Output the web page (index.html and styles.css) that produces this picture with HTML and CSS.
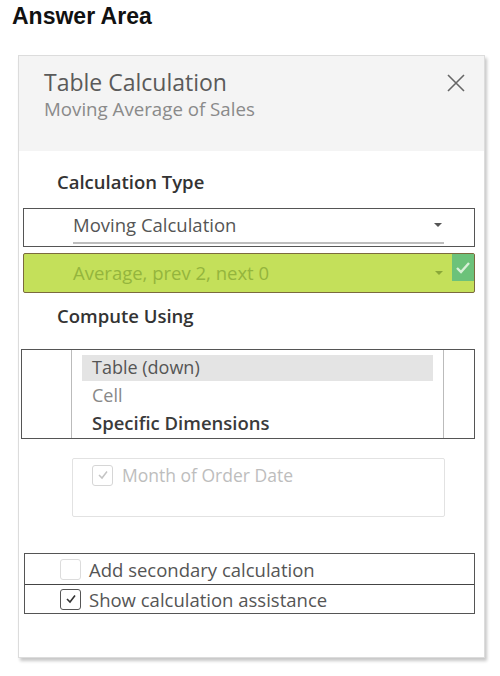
FILE: index.html
```html
<!DOCTYPE html>
<html>
<head>
<meta charset="utf-8">
<link rel="stylesheet" href="styles.css">
</head>
<body>
<h1 class="title">Answer Area</h1>
<div class="dialog">
  <div class="header">
    <div class="htext">
      <div class="htitle">Table Calculation</div>
      <div class="hsub">Moving Average of Sales</div>
    </div>
    <svg class="close" width="20" height="20" viewBox="0 0 20 20"><path d="M2 2 L18 18 M18 2 L2 18" stroke="#666" stroke-width="1.6" fill="none"/></svg>
  </div>
  <div class="content">
    <div class="label label-calc">Calculation Type</div>
    <div class="select">
      <span class="select-text">Moving Calculation</span>
      <span class="caret"></span>
      <span class="underline"></span>
    </div>
    <div class="select green">
      <span class="select-text">Average, prev 2, next 0</span>
      <span class="caret"></span>
      <span class="ok"><svg width="22" height="24" viewBox="0 0 22 24"><path d="M5 12 L9 16 L17 7" stroke="#d8f0d8" stroke-width="2.4" fill="none"/></svg></span>
    </div>
    <div class="label label-compute">Compute Using</div>
    <div class="list">
      <div class="list-inner">
        <div class="item selected">Table (down)</div>
        <div class="item">Cell</div>
        <div class="item bold">Specific Dimensions</div>
      </div>
    </div>
    <div class="dims">
      <div class="dim-row">
        <span class="cb cb-disabled"><svg width="14" height="14" viewBox="0 0 14 14"><path d="M3 7 L6 10 L11 3.5" stroke="#c4c4c4" stroke-width="1.5" fill="none"/></svg></span>
        <span>Month of Order Date</span>
      </div>
    </div>
    <div class="opts">
      <div class="opt">
        <span class="cb cb-empty"></span>
        <span>Add secondary calculation</span>
      </div>
      <div class="opt">
        <span class="cb cb-checked"><svg width="14" height="14" viewBox="0 0 14 14"><path d="M3 7 L6 10 L11 3.5" stroke="#333" stroke-width="1.6" fill="none"/></svg></span>
        <span>Show calculation assistance</span>
      </div>
    </div>
  </div>
</div>
</body>
</html>
```
FILE: styles.css
```css
* { box-sizing: border-box; }
html, body { margin: 0; padding: 0; background: #fff; }
body {
  font-family: "Open Sans", "Liberation Sans", sans-serif;
  color: #555;
  width: 500px;
  height: 676px;
  overflow: hidden;
}
.title {
  margin: 0;
  padding: 3px 0 0 12px;
  height: 55px;
  font-family: "Liberation Sans", Arial, sans-serif;
  font-weight: bold;
  font-size: 23px;
  color: #111;
  line-height: 26px;
}
.dialog {
  margin-left: 18px;
  width: 467px;
  height: 603px;
  border: 1px solid #dcdcdc;
  box-shadow: 2px 3px 3px rgba(0,0,0,0.22);
  background: #fff;
}
.header {
  height: 95px;
  background: #f4f4f4;
  display: flex;
  justify-content: space-between;
  align-items: flex-start;
  padding: 11px 18px 0 25px;
}
.htitle {
  font-size: 23px;
  color: #5a5a5a;
  line-height: 30px;
}
.hsub {
  font-size: 18.7px;
  color: #8a8a8a;
  line-height: 24px;
  margin-top: 0;
}
.close { margin-top: 6px; }
.content {
  padding: 0 9px 0 4px;
}
.label {
  font-weight: 600;
  font-size: 18.5px;
  color: #333;
  padding-left: 34px;
  line-height: 24px;
}
.label-calc { margin-top: 19px; margin-bottom: 14px; }
.select {
  position: relative;
  height: 39px;
  border: 1px solid #555;
  display: flex;
  align-items: center;
  padding-left: 49px;
  font-size: 18.5px;
  color: #555;
}
.select-text { margin-top: -6px; }
.caret {
  position: absolute;
  right: 32px;
  top: 14px;
  width: 0; height: 0;
  border-left: 4px solid transparent;
  border-right: 4px solid transparent;
  border-top: 4px solid #555;
}
.underline {
  position: absolute;
  left: 49px;
  right: 30px;
  bottom: 2px;
  height: 2px;
  background: #bdbdbd;
}
.select.green {
  margin-top: 6px;
  height: 40px;
  background: #c4e05a;
  border: 1px solid #7b6a3e;
  border-radius: 2px;
  color: #94b53d;
}
.select.green .select-text { margin-top: -2px; }
.select.green .caret { border-top-color: #8aa838; top: 17px; right: 31px; }
.ok {
  position: absolute;
  right: 0;
  top: 0;
  width: 22px;
  height: 27px;
  background: #6cc27a;
  display: flex;
  align-items: center;
  justify-content: center;
}
.label-compute { margin-top: 11px; margin-bottom: 21px; }
.list {
  height: 90px;
  border: 1px solid #555;
  margin-left: -2px;
  padding: 0 30px 0 49px;
}
.list-inner {
  height: 100%;
  border-left: 1px solid #bbb;
  border-right: 1px solid #bbb;
  padding: 5px 10px 0 10px;
}
.item {
  font-size: 18px;
  line-height: 27px;
  padding-left: 10px;
  color: #555;
  height: 27px;
}
.item.selected { background: #e4e4e4; line-height: 25px; height: 26px; }
.item:nth-child(2) { color: #888; line-height: 28px; height: 28px; }
.item.bold { font-weight: 600; color: #3a3a3a; font-size: 18.5px; }
.dims {
  margin: 19px 0 0 49px;
  width: 373px;
  height: 59px;
  border: 1px solid #e2e2e2;
  border-radius: 2px;
  padding: 4px 0 0 19px;
}
.dim-row {
  display: flex;
  align-items: center;
  gap: 9px;
  font-size: 17.5px;
  color: #bdbdbd;
}
.cb {
  width: 21px;
  height: 21px;
  border-radius: 3px;
  display: flex;
  align-items: center;
  justify-content: center;
  flex: none;
}
.cb-disabled { border: 1px solid #d6d6d6; }
.cb-empty { border: 1px solid #dcdcdc; }
.cb-checked { border: 1.5px solid #555; }
.opts {
  margin-top: 36px;
  border: 1px solid #555;
  margin-left: 1px;
}
.opt {
  height: 30px;
  display: flex;
  align-items: center;
  gap: 8px;
  padding-left: 35px;
  font-size: 18.5px;
  color: #555;
}
.opt + .opt { border-top: 1.5px solid #444; height: 29px; }
```
